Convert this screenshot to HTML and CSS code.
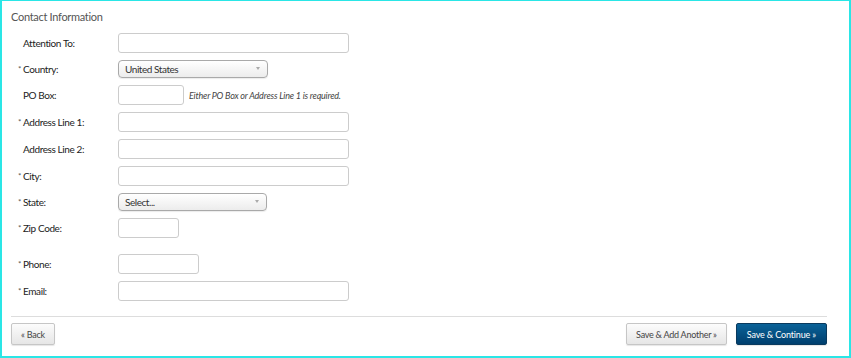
FILE: index.html
```html
<!DOCTYPE html>
<html lang="en">
<head>
    <meta charset="UTF-8">
    <title>Contact Information</title>
    <link rel="stylesheet" href="styles.css">
</head>
<body>
    <div class="frame">
        <h2 class="section-title">Contact Information</h2>
        <form class="contact-form">
            <div class="form-row">
                <label class="field-label"><span class="req"></span>Attention To:</label>
                <input type="text" class="text-input wide">
            </div>
            <div class="form-row select-row">
                <label class="field-label"><span class="req">*</span>Country:</label>
                <div class="select-wrap">
                    <select class="select-input">
                        <option>United States</option>
                    </select>
                </div>
            </div>
            <div class="form-row">
                <label class="field-label"><span class="req"></span>PO Box:</label>
                <input type="text" class="text-input po">
                <span class="hint">Either PO Box or Address Line 1 is required.</span>
            </div>
            <div class="form-row">
                <label class="field-label"><span class="req">*</span>Address Line 1:</label>
                <input type="text" class="text-input wide">
            </div>
            <div class="form-row">
                <label class="field-label"><span class="req"></span>Address Line 2:</label>
                <input type="text" class="text-input wide">
            </div>
            <div class="form-row">
                <label class="field-label"><span class="req">*</span>City:</label>
                <input type="text" class="text-input wide">
            </div>
            <div class="form-row select-row">
                <label class="field-label"><span class="req">*</span>State:</label>
                <div class="select-wrap state">
                    <select class="select-input">
                        <option>Select...</option>
                    </select>
                </div>
            </div>
            <div class="form-row zip-row">
                <label class="field-label"><span class="req">*</span>Zip Code:</label>
                <input type="text" class="text-input zip">
            </div>
            <div class="form-row">
                <label class="field-label"><span class="req">*</span>Phone:</label>
                <input type="text" class="text-input phone">
            </div>
            <div class="form-row">
                <label class="field-label"><span class="req">*</span>Email:</label>
                <input type="text" class="text-input wide">
            </div>
        </form>
        <div class="form-actions">
            <button type="button" class="btn">&laquo; Back</button>
            <div class="actions-right">
                <button type="button" class="btn">Save &amp; Add Another &raquo;</button>
                <button type="button" class="btn btn-primary">Save &amp; Continue &raquo;</button>
            </div>
        </div>
    </div>
</body>
</html>
```

FILE: styles.css
```css
html, body {
    margin: 0;
    padding: 0;
    background-color: #fff;
}
body {
    font-family: Lato, "Open Sans", sans-serif;
    color: #333;
}
.frame {
    box-sizing: border-box;
    height: 358px;
    border-style: solid;
    border-color: #2ae6e6;
    border-width: 1px 2px 2px 2px;
    padding: 8px 22px 0 9px;
}
.section-title {
    margin: 0 0 8px;
    font-size: 11px;
    line-height: 16px;
    letter-spacing: -0.3px;
    font-weight: normal;
    color: #555;
}
.contact-form {
    margin: 0;
}
.form-row {
    display: flex;
    align-items: center;
    height: 20px;
    margin-bottom: 7px;
}
.select-row {
    height: 18px;
}
.zip-row {
    margin-bottom: 16px;
}
.field-label {
    box-sizing: border-box;
    width: 107px;
    padding-left: 7px;
    font-size: 10px;
    letter-spacing: -0.4px;
    color: #222;
}
.req {
    display: inline-block;
    width: 5px;
    font-size: 8px;
    vertical-align: top;
    position: relative;
    top: 1px;
    color: #555;
}
.text-input {
    box-sizing: border-box;
    height: 20px;
    margin: 0;
    padding: 2px 4px;
    border: 1px solid #ccc;
    border-radius: 3px;
    font-family: inherit;
    font-size: 10px;
}
.text-input.wide {
    width: 231px;
}
.text-input.po {
    width: 66px;
}
.text-input.zip {
    width: 61px;
}
.text-input.phone {
    width: 81px;
}
.hint {
    margin-left: 5px;
    font-size: 9px;
    letter-spacing: -0.2px;
    font-style: italic;
    color: #444;
}
.select-wrap {
    position: relative;
    width: 150px;
    height: 18px;
}
.select-wrap.state {
    width: 149px;
}
.select-wrap::after {
    content: "";
    position: absolute;
    right: 8px;
    top: 7px;
    border-left: 2px solid transparent;
    border-right: 2px solid transparent;
    border-top: 3px solid #aaa;
    pointer-events: none;
}
.select-input {
    display: block;
    appearance: none;
    -webkit-appearance: none;
    box-sizing: border-box;
    width: 100%;
    height: 18px;
    margin: 0;
    padding: 0 6px;
    border: 1px solid #a9a9a9;
    border-radius: 4px;
    background: linear-gradient(#fff, #ececec);
    font-family: inherit;
    font-size: 10px;
    letter-spacing: -0.45px;
    color: #333;
    box-shadow: 0 1px 1px rgba(0, 0, 0, 0.08);
}
.form-actions {
    display: flex;
    justify-content: space-between;
    margin-top: 15px;
    padding-top: 6px;
    border-top: 1px solid #ddd;
}
.actions-right {
    display: flex;
    gap: 9px;
}
.btn {
    box-sizing: border-box;
    height: 22px;
    padding: 0 9px;
    border: 1px solid #c6c6c6;
    border-radius: 2px;
    background: linear-gradient(#fcfcfc, #e6e6e6);
    font-family: inherit;
    font-size: 9px;
    letter-spacing: -0.25px;
    color: #444;
    cursor: pointer;
    box-shadow: 0 1px 1px rgba(0, 0, 0, 0.1);
}
.btn-primary {
    padding: 0 10px;
    border-color: #0a3a5e;
    background: linear-gradient(#0a6298, #003f6e);
    color: #fff;
    letter-spacing: -0.15px;
}
```
